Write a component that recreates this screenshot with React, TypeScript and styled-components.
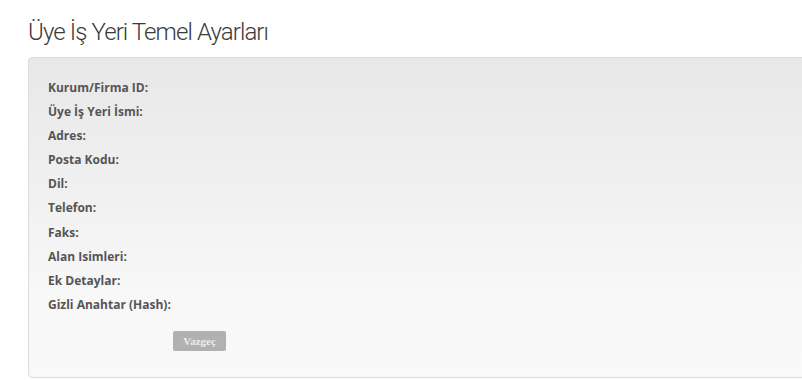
import React from 'react'
import styled, { createGlobalStyle } from 'styled-components'

const GlobalStyle = createGlobalStyle`
  html, body {
    margin: 0;
    padding: 0;
    background: #fff;
    overflow: hidden;
  }
`

const Page = styled.div`
  width: 802px;
  height: 380px;
  padding: 19px 0 0 28px;
  box-sizing: border-box;
  overflow: hidden;
`

const Title = styled.h1`
  margin: 0 0 11px 0;
  font-family: Roboto, 'Liberation Sans', sans-serif;
  font-weight: 300;
  font-size: 24px;
  line-height: 27px;
  color: #3a3a3a;
  letter-spacing: -0.9px;
`

const Panel = styled.div`
  width: 790px;
  height: 321px;
  box-sizing: border-box;
  border: 1px solid #dcdcdc;
  border-radius: 4px;
  background: linear-gradient(to bottom, #e8e8e9 0%, #f1f1f2 45%, #f8f8f8 75%, #f9f9f9 100%);
  padding: 18px 0 0 19px;
`

const FieldList = styled.dl`
  margin: 0;
  display: flex;
  flex-direction: column;
`

const Label = styled.dt`
  font-family: 'Open Sans', 'Liberation Sans', sans-serif;
  font-weight: 700;
  font-size: 12px;
  line-height: 24.1px;
  color: #555;
`

const Actions = styled.div`
  margin: 14px 0 0 125px;
  display: flex;
`

const Button = styled.button`
  width: 53px;
  height: 20px;
  padding: 0;
  border: none;
  border-radius: 2px;
  background: #b1b1b1;
  color: #ececec;
  font-family: 'Liberation Serif', 'DejaVu Serif', serif;
  font-weight: 700;
  font-size: 11px;
  cursor: pointer;
`

const fields = [
  'Kurum/Firma ID:',
  'Üye İş Yeri İsmi:',
  'Adres:',
  'Posta Kodu:',
  'Dil:',
  'Telefon:',
  'Faks:',
  'Alan Isimleri:',
  'Ek Detaylar:',
  'Gizli Anahtar (Hash):',
]

export default function App() {
  return (
    <>
      <GlobalStyle />
      <Page>
        <Title>Üye İş Yeri Temel Ayarları</Title>
        <Panel>
          <FieldList>
            {fields.map((f) => (
              <Label key={f}>{f}</Label>
            ))}
          </FieldList>
          <Actions>
            <Button>Vazgeç</Button>
          </Actions>
        </Panel>
      </Page>
    </>
  )
}
